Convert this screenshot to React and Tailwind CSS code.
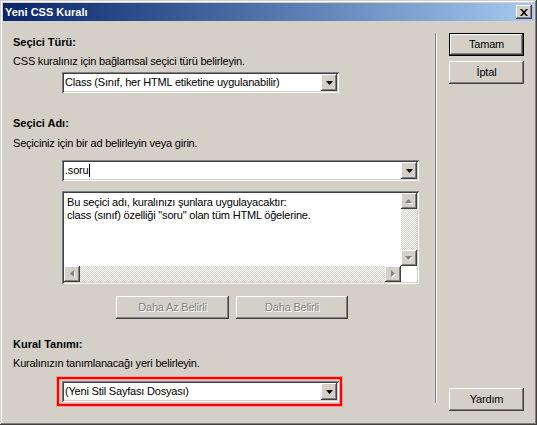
import React from "react";

const raised =
  "shadow-[inset_-1px_-1px_#404040,inset_1px_1px_#ffffff,inset_-2px_-2px_#808080,inset_2px_2px_#d4d0c8]";
const sunken =
  "shadow-[inset_1px_1px_#808080,inset_-1px_-1px_#ffffff,inset_2px_2px_#404040,inset_-2px_-2px_#d4d0c8]";
const dither =
  "bg-[image:repeating-conic-gradient(#d4d0c8_0%_25%,#ffffff_0%_50%)] bg-size-[2px_2px]";

function DownArrow({ color = "#000" }) {
  return (
    <svg width="7" height="4" viewBox="0 0 7 4">
      <polygon points="0,0 7,0 3.5,4" fill={color} />
    </svg>
  );
}

function DropBtn() {
  return (
    <div className={`w-[16px] h-[17px] bg-[#d4d0c8] flex items-center justify-center ${raised}`}>
      <DownArrow />
    </div>
  );
}

function Select({ children, width = "w-[277px]" }) {
  return (
    <div className={`${width} h-[21px] bg-white flex items-center p-[2px] ${sunken}`}>
      <div className="flex-1 pl-[1px] leading-[13px] whitespace-nowrap overflow-hidden">{children}</div>
      <DropBtn />
    </div>
  );
}

function Heading({ children, mt }) {
  return <div className={`${mt} font-bold tracking-normal leading-[13px]`}>{children}</div>;
}

function Desc({ children, mt }) {
  return <div className={`${mt} leading-[13px]`}>{children}</div>;
}

function Arrow({ dir }) {
  const pts = {
    up: "0,4 7,4 3.5,0",
    down: "0,0 7,0 3.5,4",
    left: "4,0 4,7 0,3.5",
    right: "0,0 0,7 4,3.5",
  }[dir];
  const vertical = dir === "up" || dir === "down";
  const w = vertical ? 8 : 5;
  const h = vertical ? 5 : 8;
  return (
    <svg width={w} height={h} viewBox={`0 0 ${w} ${h}`}>
      <polygon points={pts} fill="#ffffff" transform="translate(1,1)" />
      <polygon points={pts} fill="#808080" />
    </svg>
  );
}

function ScrollBtn({ dir }) {
  return (
    <div className={`w-[16px] h-[16px] bg-[#d4d0c8] flex items-center justify-center ${raised}`}>
      <Arrow dir={dir} />
    </div>
  );
}

function Button({ children, isDefault, mt = "" }) {
  const inner = (
    <div className={`h-full w-full flex items-center justify-center bg-[#d4d0c8] ${raised}`}>
      {children}
    </div>
  );
  if (isDefault) {
    return <div className={`${mt} w-[75px] h-[23px] border border-black`}>{inner}</div>;
  }
  return <div className={`${mt} w-[75px] h-[23px]`}>{inner}</div>;
}

function DisabledButton({ children, width }) {
  return (
    <div className={`${width} h-[23px]`}>
      <div
        className={`h-full w-full flex items-center justify-center bg-[#d4d0c8] ${raised} text-[#808080] [text-shadow:1px_1px_0_#ffffff]`}
      >
        {children}
      </div>
    </div>
  );
}

export default function App() {
  return (
    <div
      className={`w-[537px] h-[425px] bg-[#d4d0c8] p-[3px] flex flex-col text-[11px] tracking-[-0.2px] text-black font-['Liberation_Sans',Arial,sans-serif] shadow-[inset_-1px_-1px_#404040,inset_1px_1px_#d4d0c8,inset_-2px_-2px_#808080,inset_2px_2px_#ffffff] overflow-hidden`}
    >
      {/* Title bar */}
      <div className="h-[18px] bg-linear-to-r from-[#0a246a] to-[#a6caf0] flex items-center justify-between pl-[2px] pr-[2px]">
        <span className="text-white font-bold tracking-normal leading-[13px]">Yeni CSS Kuralı</span>
        <div className={`w-[16px] h-[14px] bg-[#d4d0c8] flex items-center justify-center ${raised}`}>
          <svg width="8" height="7" viewBox="0 0 8 7">
            <path d="M0 0h2l2 2.2L6 0h2L5 3.5 8 7H6L4 4.8 2 7H0l3-3.5z" fill="#000" />
          </svg>
        </div>
      </div>

      {/* Body */}
      <div className="flex flex-1 mt-[1px]">
        {/* Left column */}
        <div className="w-[432px] pl-[10px] flex flex-col">
          <Heading mt="mt-[14px]">Seçici Türü:</Heading>
          <Desc mt="mt-[6px]">CSS kuralınız için bağlamsal seçici türü belirleyin.</Desc>
          <div className="mt-[4px] ml-[49px]">
            <Select>Class (Sınıf, her HTML etiketine uygulanabilir)</Select>
          </div>

          <Heading mt="mt-[24px]">Seçici Adı:</Heading>
          <Desc mt="mt-[7px]">Seçiciniz için bir ad belirleyin veya girin.</Desc>
          <div className="mt-[10px] ml-[49px]">
            <Select width="w-[357px]">
              <span className="inline-flex items-center">
                .soru<span className="inline-block w-[1px] h-[13px] bg-black ml-[1px]" />
              </span>
            </Select>
          </div>

          {/* Info area with scrollbars */}
          <div className={`mt-[10px] ml-[49px] w-[357px] h-[93px] bg-white p-[2px] ${sunken}`}>
            <div className="grid grid-cols-[1fr_16px] grid-rows-[1fr_16px] h-full">
              <div className="pl-[3px] pt-[3px] leading-[13px]">
                <div>Bu seçici adı, kuralınızı şunlara uygulayacaktır:</div>
                <div>class (sınıf) özelliği "soru" olan tüm HTML öğelerine.</div>
              </div>
              <div className={`flex flex-col ${dither}`}>
                <ScrollBtn dir="up" />
                <div className="flex-1" />
                <ScrollBtn dir="down" />
              </div>
              <div className={`flex ${dither}`}>
                <ScrollBtn dir="left" />
                <div className="flex-1" />
                <ScrollBtn dir="right" />
              </div>
              <div className="bg-white" />
            </div>
          </div>

          <div className="mt-[12px] ml-[103px] flex gap-[7px]">
            <DisabledButton width="w-[113px]">Daha Az Belirli</DisabledButton>
            <DisabledButton width="w-[112px]">Daha Belirli</DisabledButton>
          </div>

          <Heading mt="mt-[19px]">Kural Tanımı:</Heading>
          <Desc mt="mt-[6px]">Kuralınızın tanımlanacağı yeri belirleyin.</Desc>
          <div className="mt-[7px] ml-[44px] w-[285px] h-[29px] border-2 border-[#ff0000] shadow-[0_0_0_1px_#ff9c9c,inset_0_0_0_1px_#ff9c9c] pt-[2px] pl-[3px]">
            <Select>(Yeni Stil Sayfası Dosyası)</Select>
          </div>
        </div>

        {/* Separator */}
        <div className="mt-[11px] w-[2px] h-[370px] border-l border-[#808080] bg-white" />

        {/* Right column */}
        <div className="pl-[12px] flex flex-col">
          <Button isDefault mt="mt-[11px]">Tamam</Button>
          <Button mt="mt-[5px]">İptal</Button>
          <div className="flex-1" />
          <Button>Yardım</Button>
          <div className="h-[11px]" />
        </div>
      </div>
    </div>
  );
}
